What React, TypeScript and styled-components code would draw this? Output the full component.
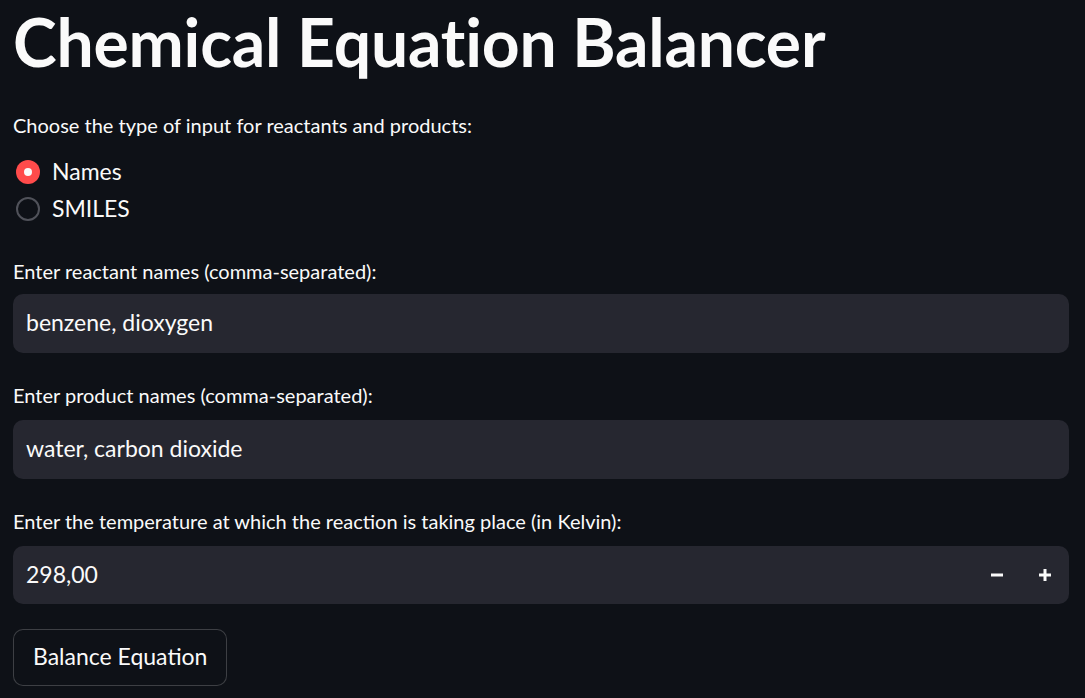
import React from "react";
import styled, { createGlobalStyle } from "styled-components";

const Global = createGlobalStyle`
  html, body {
    margin: 0;
    padding: 0;
    background: #0e1117;
  }
  body {
    font-family: Lato, "Noto Sans", sans-serif;
    color: #fafafa;
    -webkit-font-smoothing: antialiased;
  }
  * { box-sizing: border-box; }
`;

const Main = styled.main`
  width: 1085px;
  height: 698px;
  overflow: hidden;
  padding: 0 16px 0 13px;
  display: flex;
  flex-direction: column;
`;

const Title = styled.h1`
  margin: 0;
  font-size: 66px;
  font-weight: 700;
  line-height: 84px;
  height: 86px;
  letter-spacing: -0.2px;
  color: #fafafa;
  white-space: nowrap;
`;

const Label = styled.div<{ $top: number }>`
  margin-top: ${(p) => p.$top}px;
  font-size: 20px;
  line-height: 23px;
  height: 26px;
  color: #fafafa;
  white-space: nowrap;
`;

const RadioGroup = styled.div`
  margin-top: 14px;
  display: flex;
  flex-direction: column;
`;

const RadioRow = styled.label`
  display: flex;
  align-items: center;
  height: 37px;
  gap: 12px;
  padding-left: 3px;
  font-size: 23px;
  cursor: pointer;
`;

const RadioText = styled.span`
  margin-bottom: 3px;
`;

const RadioCircle = styled.span<{ $checked: boolean }>`
  flex: none;
  width: 24px;
  height: 24px;
  margin-bottom: 1px;
  border-radius: 50%;
  display: flex;
  align-items: center;
  justify-content: center;
  background: ${(p) => (p.$checked ? "#ff4b4b" : "#0e1117")};
  border: ${(p) => (p.$checked ? "none" : "2px solid #50525a")};
  &::after {
    content: "";
    display: ${(p) => (p.$checked ? "block" : "none")};
    width: 8px;
    height: 8px;
    border-radius: 50%;
    background: #fafafa;
  }
`;

const InputBox = styled.div<{ $top: number; $h: number; $stepper?: boolean }>`
  margin-top: ${(p) => p.$top}px;
  height: ${(p) => p.$h}px;
  width: 100%;
  background: #262730;
  border-radius: 10px;
  display: flex;
  align-items: center;
  padding: 0 ${(p) => (p.$stepper ? 0 : 13)}px 0 13px;
  font-size: 23px;
  color: #fafafa;
`;

const Value = styled.span`
  flex: 1;
  margin-bottom: 3px;
`;

const StepButton = styled.button`
  width: 48px;
  height: 100%;
  background: transparent;
  border: none;
  display: flex;
  align-items: center;
  justify-content: center;
  color: #fafafa;
  padding: 0;
`;

const Button = styled.button`
  margin-top: 25px;
  align-self: flex-start;
  height: 57px;
  padding: 0 19px 3px;
  background: #0e1117;
  border: 1px solid rgba(250, 250, 250, 0.2);
  border-radius: 10px;
  color: #fafafa;
  font-family: inherit;
  font-size: 23px;
`;

const Minus = () => (
  <svg width="14" height="14" viewBox="0 0 14 14">
    <rect x="1" y="5.5" width="12" height="3" fill="#fafafa" />
  </svg>
);

const Plus = () => (
  <svg width="14" height="14" viewBox="0 0 14 14">
    <rect x="1" y="5.5" width="12" height="3" fill="#fafafa" />
    <rect x="5.5" y="1" width="3" height="12" fill="#fafafa" />
  </svg>
);

export default function App() {
  return (
    <>
      <Global />
      <Main>
        <Title>Chemical Equation Balancer</Title>
        <Label $top={28}>Choose the type of input for reactants and products:</Label>
        <RadioGroup>
          <RadioRow>
            <RadioCircle $checked />
            <RadioText>Names</RadioText>
          </RadioRow>
          <RadioRow>
            <RadioCircle $checked={false} />
            <RadioText>SMILES</RadioText>
          </RadioRow>
        </RadioGroup>
        <Label $top={32}>Enter reactant names (comma-separated):</Label>
        <InputBox $top={8} $h={59}>
          <Value>benzene, dioxygen</Value>
        </InputBox>
        <Label $top={31}>Enter product names (comma-separated):</Label>
        <InputBox $top={10} $h={59}>
          <Value>water, carbon dioxide</Value>
        </InputBox>
        <Label $top={31}>Enter the temperature at which the reaction is taking place (in Kelvin):</Label>
        <InputBox $top={10} $h={58} $stepper>
          <Value>298,00</Value>
          <StepButton aria-label="minus">
            <Minus />
          </StepButton>
          <StepButton aria-label="plus">
            <Plus />
          </StepButton>
        </InputBox>
        <Button>Balance Equation</Button>
      </Main>
    </>
  );
}
